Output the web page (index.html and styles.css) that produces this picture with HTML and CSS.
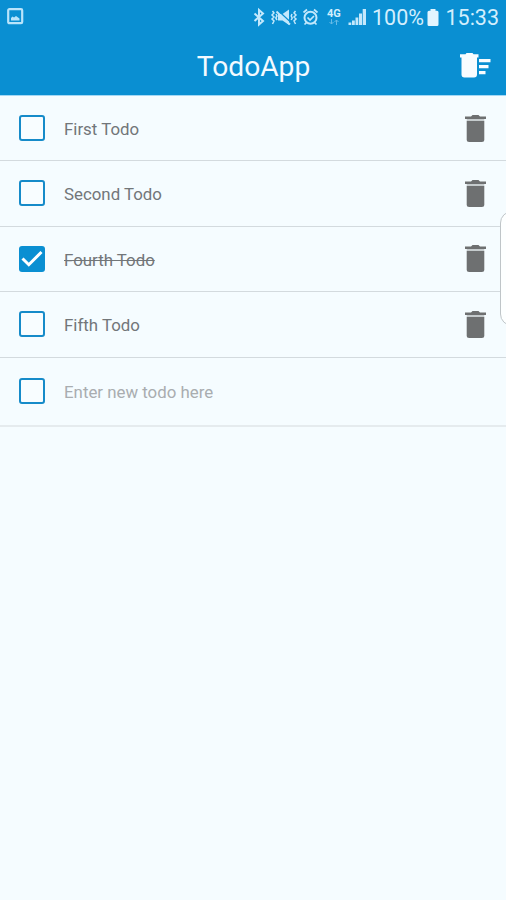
FILE: index.html
```html
<!DOCTYPE html>
<html lang="en">
<head>
<meta charset="utf-8">
<title>TodoApp</title>
<link rel="stylesheet" href="styles.css">
</head>
<body>
<svg width="0" height="0" class="defs" aria-hidden="true">
  <symbol id="trash" viewBox="0 0 21 27">
    <path d="M6 1.500 7.500 0h6L15 1.500H21V4H0V1.500z"/>
    <path d="M1.700 4h17.600v2H1.700z" opacity=".35"/>
    <path d="M1.700 6h17.600v18.500q0 2.500-2.500 2.500H4.200q-2.500 0-2.500-2.500z"/>
  </symbol>
</svg>
<div class="screen">
  <header class="top">
    <div class="status">
      <svg class="picture" width="17" height="17" viewBox="0 0 17 17"><rect x="1.200" y="1.200" width="14" height="14" rx="1.200" fill="none" stroke="#b9e4fb" stroke-width="2.200"/><path d="M4 12.500V10l1.500-1.500 1.500 1L9 8l3.500 2.500v2z" fill="#b9e4fb"/></svg>
      <svg class="signals" width="71" height="22" viewBox="0 0 71 22" fill="none" stroke="#c3e8fc" stroke-width="2">
        <path d="M3.500 6.500 12 14 8 17.500V3l4 3.500-8.500 7.500"/>
        <path stroke-width="1.500" d="M21.500 4l1.500 2-2 2 2 2-2 2 2 2-1.500 3M25 7l1 2-1.200 2 1.200 2M44.500 4 43 6l2 2-2 2 2 2-2 2 1.500 3M41 7l-.8 2 1 2-1 2"/>
        <path d="M27 7h4.500l6.500-4.500v15.500l-6.500-4.500H27z" fill="#c3e8fc" stroke="none"/>
        <path d="M26.500 3 40 15.500" stroke="#0a8fd2" stroke-width="1.200"/><path d="M25.500 4.500 39 17.500" stroke-width="1.800"/>
        <circle cx="59.500" cy="10.700" r="6"/>
        <path stroke-width="1.700" d="M56.500 10.500l2.500 2.500 4-4M52.500 5.500l3.500-3M63 2.500l3.500 3M55.500 15.500l-2 2M63.500 15.500l2 2"/>
      </svg>
      <div class="network">
        <b>4G</b>
        <svg width="14" height="6" viewBox="0 0 14 6" fill="none" stroke="#c3e8fc" opacity=".5"><path d="M4.500 0v5M2.500 3l2 2 2-2M9.500 6V1M7.500 3l2-2 2 2"/></svg>
      </div>
      <svg class="bars" width="19" height="16" viewBox="0 0 19 16" fill="#c3e8fc"><path d="M.5 13.500H3.300V16H.5zM4 11.500h2.800V16H4zM7.500 8.500h2.800V16H7.500zM11 4.500h3V16h-3zM14.700 0H18v16h-3.300z"/></svg>
      <span class="percent">100%</span>
      <svg class="battery" width="12" height="17" viewBox="0 0 12 17"><path d="M3.500 0h5v1.800H10q1.500 0 1.500 1.500V15.500q0 1.500-1.500 1.500H2Q.5 17 .5 15.500V3.300Q.5 1.800 2 1.800h1.500z" fill="#e3f5ff"/></svg>
      <span class="clock">15:33</span>
    </div>
    <div class="bar">
      <h1>TodoApp</h1>
      <svg class="sweep" width="31" height="25" viewBox="0 0 31 25" fill="#f8fcff"><path d="M5.500 1.200 6.500 0h6l1 1.200h5V4.500H0V1.200zM1.500 4.500H17v17q0 3-3 3H4.500q-3 0-3-3zM19 6h11.500v3.200H19zM19 12h9.500v3.200H19zM19 18h6.500v3.200H19z"/></svg>
    </div>
  </header>
  <ul class="list">
    <li class="row"><span class="box"></span><span class="label">First Todo</span><svg class="trash"><use href="#trash"/></svg></li>
    <li class="row"><span class="box"></span><span class="label">Second Todo</span><svg class="trash"><use href="#trash"/></svg></li>
    <li class="row"><span class="box checked"><svg width="26" height="26" viewBox="0 0 26 26"><path d="M3.500 12.500l6.300 6.200L22.500 6" fill="none" stroke="#fff" stroke-width="3"/></svg></span><span class="label done">Fourth Todo</span><svg class="trash"><use href="#trash"/></svg></li>
    <li class="row"><span class="box"></span><span class="label">Fifth Todo</span><svg class="trash"><use href="#trash"/></svg></li>
    <li class="row entry"><span class="box"></span><span class="label hint">Enter new todo here</span></li>
  </ul>
  <div class="edge"></div>
</div>
</body>
</html>
```

FILE: styles.css
```css
* { box-sizing: border-box; }
body { margin: 0; font-family: Roboto, "Liberation Sans", sans-serif; }
.defs { position: absolute; }
.screen { position: relative; width: 506px; height: 900px; overflow: hidden; background: #f5fcff; }
.top { height: 96px; background: #0a8fd2; border-bottom: 1px solid #a3d8f5; }
.status { display: flex; height: 36px; align-items: flex-start; padding-top: 7px; color: #d3eefd; }
.status > * { flex: none; }
.picture { margin: 1px 0 0 7px; }
.signals { margin-left: 227px; }
.network { display: flex; flex-direction: column; width: 20px; margin: 2px 0 0 5px; }
.network b { font-size: 11px; line-height: 10px; font-weight: 700; }
.bars { margin: 2px 0 0 1px; }
.percent { width: 54px; margin-left: 5px; font-size: 21.500px; line-height: 22px; white-space: nowrap; }
.battery { margin: 2px 0 0 1px; }
.clock { margin-left: 6.500px; font-size: 21.500px; line-height: 22px; white-space: nowrap; }
.bar { display: grid; grid-template-columns: 46px 1fr 46px; height: 59px; align-items: center; }
h1 { grid-column: 2; margin: 3px 0 0 1px; text-align: center; font-size: 28.200px; font-weight: 400; line-height: 34px; color: #f3faff; }
.list { margin: 0; padding: 0; list-style: none; }
.row { display: flex; height: 65.400px; align-items: center; padding: 0 20.500px .4px 19px; border-bottom: 1px solid #d3dade; }
.box { width: 26px; height: 26px; flex: none; border: 2.500px solid #168bc9; border-radius: 3px; background: #f8fdff; }
.checked { border: 0; background: #0a8fd2; }
.checked svg { display: block; }
.label { flex: 1; margin: 1.500px 0 0 19px; font-size: 16.850px; line-height: 22px; color: #727679; white-space: nowrap; }
.done { text-decoration: line-through; }
.trash { width: 21px; height: 27px; flex: none; fill: #6e7071; }
.entry { height: 69.400px; padding-bottom: 1px; border-bottom: 2px solid #e5ebee; }
.hint { color: #a9adb0; }
.edge { position: absolute; top: 211px; left: 500px; width: 30px; height: 115px; border: 1px solid #bfc5c8; border-radius: 12px; background: #fdffff; }
```
